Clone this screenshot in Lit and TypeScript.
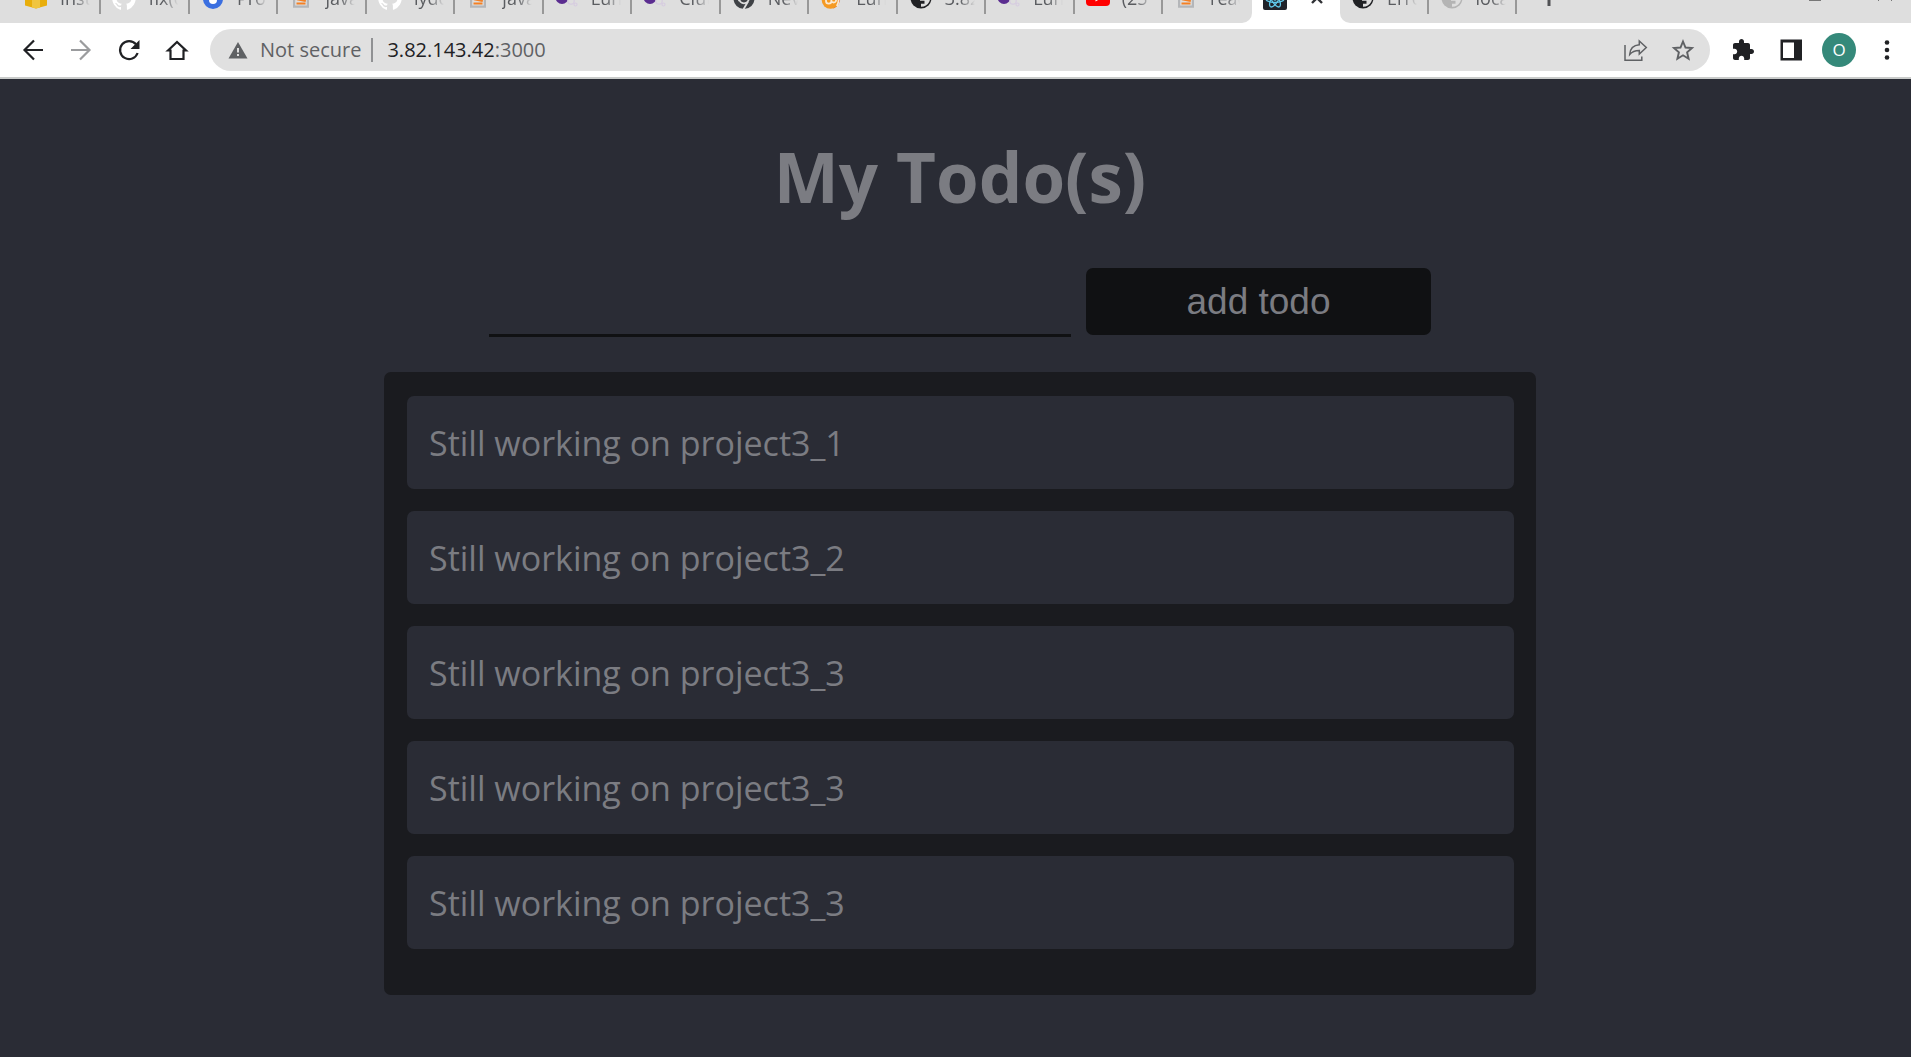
import { LitElement, html, svg, css, nothing, TemplateResult } from "lit";
import { customElement, state } from "lit/decorators.js";

const globe = (color: string) => svg`
  <circle cx="12" cy="12" r="10.500" fill=${color} />
  <path fill="#dedede" d="M12 20.800v-3h3.500v-3h-4.500v-3h5.500V4l3 2.600a9 9 0 0 1 -7.500 14.200z" />`;

const overflowMark = svg`
  <path fill="#b4b6b9" d="M4 13h2.200v6.400h11.600V13h2.200v8.800H4z" />
  <path stroke="#f48024" stroke-width="2" d="M7.500 17.600h9M8 13.200l8.800 1.800M9.500 9l8 3.800" />`;

const lumenMark = svg`
  <circle cx="7" cy="11.500" r="6.500" fill="#5b2d90" />
  <g fill="none" stroke="#d6cce0" stroke-width="1.200">
    <circle cx="16" cy="15" r="3.200" /><circle cx="20.500" cy="18.500" r="1.500" />
  </g>`;

const octocat = svg`
  <path fill="#fff" d="M12 .500a12 12 0 0 0-3.800 23.300c.600.100.800-.200.800-.600v-2.200c-3.300.700-4-1.400-4-1.400-.600-1.400-1.400-1.800-1.400-1.800-1-.700.100-.700.100-.700 1.200.100 1.900 1.200 1.900 1.200 1 1.800 2.800 1.300 3.500 1 .100-.800.400-1.300.700-1.600-2.700-.300-5.500-1.300-5.500-5.900 0-1.300.500-2.400 1.200-3.200 0-.400-.500-1.600.200-3.200 0 0 1-.300 3.300 1.200a11.500 11.500 0 0 1 6 0c2.300-1.500 3.300-1.200 3.300-1.200.700 1.600.200 2.800.100 3.200.800.800 1.200 1.900 1.200 3.200 0 4.600-2.800 5.600-5.500 5.900.400.400.800 1.100.800 2.200v3.300c0 .300.200.700.800.600A12 12 0 0 0 12 .500z" />`;

const favicons: Record<string, TemplateResult> = {
  cube: svg`
    <path fill="#e8ae0c" d="M1 3l11-3 11 3v16.500L12 22.500 1 19.500z" />
    <path fill="#f0c540" d="M8 6h8v15.500l-4 1-4-1z" />`,
  octocat,
  profile: svg`
    <circle cx="12" cy="13" r="10" fill="#3b6fe0" />
    <circle cx="12" cy="14" r="4" fill="#fff" />
    <circle cx="12" cy="12.500" r="1.600" fill="#3b6fe0" />`,
  overflow: overflowMark,
  lumen: lumenMark,
  chrome: svg`
    <circle cx="12" cy="12.500" r="10.500" fill="#3f4246" />
    <circle cx="12" cy="12.500" r="4.800" fill="none" stroke="#dedede" stroke-width="1.800" />
    <path fill="none" stroke="#dedede" stroke-width="1.800" d="M16 15.500l-4.600 8M7.500 15l-4.500-8M12 7.500h9.500" />`,
  swirl: svg`
    <path fill="#d94f1e" d="M14 4c6 1 7.500 7 5.500 12-1 3-3 5-6 6.500z" />
    <circle cx="10.500" cy="14" r="8.800" fill="#f59a23" />
    <path fill="none" stroke="#fbe9d2" stroke-width="1.800" d="M6 10v5a2.700 2.700 0 0 0 5.400 0v-5M11.400 15a2.500 2.500 0 0 0 4.600 0v-5M18 9c1.200 4 .600 8-1.200 11" />`,
  globe: globe("#202124"),
  globeLight: globe("#b4b4b4"),
  video: svg`
    <rect x="0" y="3" width="24" height="17" rx="4" fill="#f00" />
    <path fill="#fff" d="M9.500 8v7.500l6.500-3.800z" />`,
  react: svg`
    <rect width="24" height="24" rx="2" fill="#20232a" />
    <g fill="none" stroke="#61c9ea" stroke-width="1.300">
      <ellipse cx="12" cy="13" rx="9" ry="3.500" />
      <ellipse cx="12" cy="13" rx="9" ry="3.500" transform="rotate(60 12 13)" />
      <ellipse cx="12" cy="13" rx="9" ry="3.500" transform="rotate(120 12 13)" />
    </g>
    <circle cx="12" cy="13" r="1.800" fill="#61c9ea" />`,
};

interface Tab {
  icon: string;
  title: string;
}

const leadingTabs: Tab[] = [
  { icon: "cube", title: "Inst" },
  { icon: "octocat", title: "fix(c" },
  { icon: "profile", title: "Prof" },
  { icon: "overflow", title: "java" },
  { icon: "octocat", title: "lydc" },
  { icon: "overflow", title: "java" },
  { icon: "lumen", title: "Lun" },
  { icon: "lumen", title: "Clut" },
  { icon: "chrome", title: "Nev" },
  { icon: "swirl", title: "Lun" },
  { icon: "globe", title: "3.82" },
  { icon: "lumen", title: "Lun" },
  { icon: "video", title: "(25" },
  { icon: "overflow", title: "reac" },
];

const trailingTabs: Tab[] = [
  { icon: "globe", title: "Erro" },
  { icon: "globeLight", title: "loca" },
];

@customElement("browser-tabs")
class BrowserTabs extends LitElement {
  static styles = css`
    :host {
      display: flex;
      align-items: flex-end;
      height: 23px;
      overflow: hidden;
      background: #fff;
      font-family: "Open Sans", "Noto Sans", sans-serif;
    }
    .group {
      display: flex;
      box-sizing: border-box;
      min-width: 0;
      background: #dedede;
    }
    .leading {
      flex: 14 1 13px;
      padding-left: 13px;
      border-bottom-right-radius: 10px;
    }
    .trailing {
      flex: 2 1 394px;
      border-bottom-left-radius: 10px;
    }
    .tab {
      display: flex;
      flex: 1 1 0;
      align-items: center;
      box-sizing: border-box;
      min-width: 0;
      height: 50px;
      padding: 0;
      border: 0;
      background: none;
      color: #5a5c60;
      font: inherit;
      font-size: 18px;
      line-height: 24px;
    }
    .favicon {
      flex: none;
      width: 24px;
      height: 24px;
      margin-left: 11px;
    }
    .title {
      width: 30px;
      margin-left: 12px;
      overflow: hidden;
      white-space: nowrap;
      text-align: left;
      -webkit-mask-image: linear-gradient(to right, #000 50%, transparent);
      mask-image: linear-gradient(to right, #000 50%, transparent);
    }
    .divider {
      width: 2px;
      height: 31px;
      margin-left: auto;
      background: #989898;
    }
    .close {
      width: 16px;
      height: 16px;
      margin-left: 22px;
    }
    .controls {
      display: flex;
      flex: none;
      align-items: center;
      box-sizing: border-box;
      width: 394px;
      height: 50px;
      padding: 0 16px 0 22px;
    }
    .control {
      display: flex;
      padding: 0;
      border: 0;
      background: none;
    }
    .glyph {
      width: 20px;
      height: 20px;
    }
    .minimize {
      margin-left: auto;
      margin-right: 50px;
    }
  `;

  private renderTab(tab: Tab, divided: boolean) {
    return html`
      <button class="tab">
        <svg class="favicon" viewBox="0 0 24 24" aria-hidden="true">${favicons[tab.icon]}</svg>
        <span class="title">${tab.title}</span>
        ${divided ? html`<span class="divider"></span>` : nothing}
      </button>
    `;
  }

  render() {
    return html`
      <div class="group leading">
        ${leadingTabs.map((tab, i) => this.renderTab(tab, i < leadingTabs.length - 1))}
      </div>
      <button class="tab" aria-label="Todo app">
        <svg class="favicon" viewBox="0 0 24 24" aria-hidden="true">${favicons.react}</svg>
        <svg class="close" viewBox="0 0 16 16" aria-hidden="true">
          <path d="M3 3l10 10M13 3L3 13" stroke="#303236" stroke-width="2.400" />
        </svg>
      </button>
      <div class="group trailing">
        ${trailingTabs.map((tab) => this.renderTab(tab, true))}
        <div class="controls">
          <button class="control" aria-label="New tab">
            <svg class="glyph" viewBox="0 0 20 20"><path d="M10 2v16M2 10h16" stroke="#505154" stroke-width="3" /></svg>
          </button>
          <button class="control minimize" aria-label="Minimize">
            <svg class="glyph" viewBox="0 0 20 20"><path d="M4 12.500h12" stroke="#777" stroke-width="1" /></svg>
          </button>
          <button class="control" aria-label="Close">
            <svg class="glyph" viewBox="0 0 20 20"><path d="M3 -1l14 14M17 -1L3 13" stroke="#777" stroke-width="1" /></svg>
          </button>
        </div>
      </div>
    `;
  }
}

@customElement("browser-toolbar")
class BrowserToolbar extends LitElement {
  static styles = css`
    :host {
      display: flex;
      align-items: center;
      gap: 18px;
      box-sizing: border-box;
      height: 56px;
      padding: 0 9px 0 18px;
      border-bottom: 2px solid #c9cbca;
      background: #fff;
      color: #202124;
      font-family: "Open Sans", "Noto Sans", sans-serif;
    }
    .tool {
      display: flex;
      flex: none;
      padding: 0;
      border: 0;
      background: none;
      color: inherit;
    }
    .icon {
      width: 30px;
      height: 30px;
    }
    .line {
      fill: none;
      stroke: currentColor;
      stroke-width: 2.2;
    }
    .faded {
      color: #9b9c9e;
    }
    .omnibox {
      display: flex;
      flex: 1;
      align-items: center;
      box-sizing: border-box;
      min-width: 0;
      height: 42px;
      padding: 0 12px 0 18px;
      border-radius: 21px;
      background: #e0e0e0;
      color: #5f6164;
      font-size: 20px;
      line-height: 26px;
    }
    .warning {
      width: 20px;
      height: 18px;
    }
    .security {
      margin: 0 10px 0 12px;
      white-space: nowrap;
    }
    .rule {
      width: 2px;
      height: 24px;
      margin-right: 14px;
      background: #909193;
    }
    .address {
      flex: 1;
    }
    .host {
      color: #202124;
    }
    .page-actions {
      display: flex;
      gap: 18px;
    }
    .avatar {
      justify-content: center;
      width: 34px;
      height: 34px;
      margin: 0 -2px;
      border-radius: 50%;
      background: #35897a;
      color: #fff;
      font: 17px/34px "Open Sans", "Noto Sans", sans-serif;
    }
  `;

  render() {
    return html`
      <button class="tool" aria-label="Back">
        <svg class="icon" viewBox="0 0 30 30"><path class="line" d="M25 15H7M16 5.500L6.500 15l9.500 9.500" /></svg>
      </button>
      <button class="tool faded" aria-label="Forward">
        <svg class="icon" viewBox="0 0 30 30"><path class="line" d="M5 15h18M14 5.500l9.500 9.500-9.500 9.500" /></svg>
      </button>
      <button class="tool" aria-label="Reload">
        <svg class="icon" viewBox="0 0 30 30">
          <path class="line" d="M23.600 18A9 9 0 1 1 22 9.300" />
          <path fill="currentColor" d="M25.500 5v9h-9z" />
        </svg>
      </button>
      <button class="tool" aria-label="Home">
        <svg class="icon" viewBox="0 0 30 30"><path class="line" d="M6 15.500L15 7l9 8.500h-2.500V24h-13v-8.500z" /></svg>
      </button>
      <div class="omnibox">
        <svg class="warning" viewBox="0 0 20 18" aria-hidden="true">
          <path fill="#5f6164" d="M10 1l9.500 16.500H.500z" />
          <path stroke="#e0e0e0" stroke-width="2" d="M10 7v4.500M10 13v2" />
        </svg>
        <span class="security">Not secure</span>
        <span class="rule"></span>
        <span class="address"><span class="host">3.82.143.42</span>:3000</span>
        <div class="page-actions">
          <button class="tool" aria-label="Share">
            <svg class="icon" viewBox="0 0 30 30" fill="none" stroke="currentColor" stroke-width="1.500">
              <path d="M5 10v15.300h16.800V21.500" />
              <path d="M19.300 6l7 6.500-7 6.500v-3.500c-4.300 0-7.300 1.200-9.600 4 .400-5.500 3.800-9.300 9.600-9.700z" />
            </svg>
          </button>
          <button class="tool" aria-label="Bookmark">
            <svg class="icon" viewBox="0 0 30 30">
              <path fill="none" stroke="currentColor" stroke-width="1.900" d="M15 6.500l2.500 6 6.500.500-4.900 4.300 1.500 6.400-5.600-3.400-5.600 3.400 1.500-6.400L6 13l6.500-.500z" />
            </svg>
          </button>
        </div>
      </div>
      <button class="tool" aria-label="Extensions">
        <svg class="icon" viewBox="-3 -3 30 30">
          <path fill="currentColor" d="M20.500 11H19V7c0-1.100-.900-2-2-2h-4V3.500C13 2.120 11.880 1 10.500 1S8 2.120 8 3.500V5H4c-1.100 0-1.990.900-1.990 2v3.800H3.500c1.490 0 2.700 1.210 2.700 2.700s-1.210 2.700-2.700 2.700H2V20c0 1.100.900 2 2 2h3.800v-1.500c0-1.490 1.210-2.700 2.700-2.700s2.700 1.210 2.700 2.700V22H17c1.100 0 2-.900 2-2v-4h1.500c1.380 0 2.500-1.120 2.500-2.500S21.880 11 20.500 11z" />
        </svg>
      </button>
      <button class="tool" aria-label="Side panel">
        <svg class="icon" viewBox="0 0 30 30">
          <path fill="currentColor" fill-rule="evenodd" d="M4.500 4.500h21.500v21H4.500zM7 7.500v15.500h11V7.500z" />
        </svg>
      </button>
      <button class="tool avatar">O</button>
      <button class="tool" aria-label="Menu">
        <svg class="icon" viewBox="0 0 30 30" fill="currentColor">
          <circle cx="15" cy="7.500" r="2.300" /><circle cx="15" cy="15" r="2.300" /><circle cx="15" cy="22.500" r="2.300" />
        </svg>
      </button>
    `;
  }
}

@customElement("todo-page")
class TodoPage extends LitElement {
  static styles = css`
    :host {
      display: block;
      box-sizing: border-box;
      padding: 48px 0 62px 9px;
      background: #2a2c35;
      color: #7b7c82;
      font-family: "Open Sans", "Noto Sans", sans-serif;
    }
    .heading {
      margin: 0 0 43px;
      font-size: 69px;
      font-weight: 700;
      line-height: 98px;
      text-align: center;
    }
    .entry {
      display: flex;
      justify-content: center;
      align-items: flex-start;
      gap: 15px;
      margin-bottom: 35px;
    }
    .field {
      box-sizing: border-box;
      width: 582px;
      height: 69px;
      padding: 0 8px;
      border: 0;
      border-bottom: 3px solid #101113;
      outline: 0;
      background: transparent;
      color: inherit;
      font: 37px "Liberation Sans", Arial, sans-serif;
    }
    .add {
      width: 345px;
      height: 67px;
      padding: 0;
      border: 0;
      border-radius: 7px;
      background: #101113;
      color: inherit;
      font: 37px "Liberation Sans", Arial, sans-serif;
    }
    .list {
      display: flex;
      flex-direction: column;
      gap: 22px;
      box-sizing: border-box;
      max-width: 1152px;
      margin: 0 auto;
      padding: 24px 22px 46px 23px;
      border-radius: 7px;
      background: #1a1b1f;
      list-style: none;
    }
    .item {
      padding: 23px 22px 21px;
      border-radius: 7px;
      background: #2a2c35;
      font-size: 34px;
      line-height: 49px;
    }
  `;

  @state() private todos = [
    "Still working on project3_1",
    "Still working on project3_2",
    "Still working on project3_3",
    "Still working on project3_3",
    "Still working on project3_3",
  ];

  private add(event: Event) {
    event.preventDefault();
    const field = this.renderRoot.querySelector("input")!;
    if (field.value.trim()) {
      this.todos = [...this.todos, field.value.trim()];
      field.value = "";
    }
  }

  render() {
    return html`
      <h1 class="heading">My Todo(s)</h1>
      <form class="entry" @submit=${this.add}>
        <input class="field" type="text" aria-label="New todo" />
        <button class="add" type="submit">add todo</button>
      </form>
      <ul class="list">
        ${this.todos.map((todo) => html`<li class="item">${todo}</li>`)}
      </ul>
    `;
  }
}

@customElement("app-root")
class AppRoot extends LitElement {
  static styles = css`
    :host {
      display: flex;
      flex-direction: column;
      min-height: 100vh;
    }
    .page {
      flex: 1;
    }
  `;

  render() {
    return html`
      <browser-tabs></browser-tabs>
      <browser-toolbar></browser-toolbar>
      <todo-page class="page"></todo-page>
    `;
  }
}
